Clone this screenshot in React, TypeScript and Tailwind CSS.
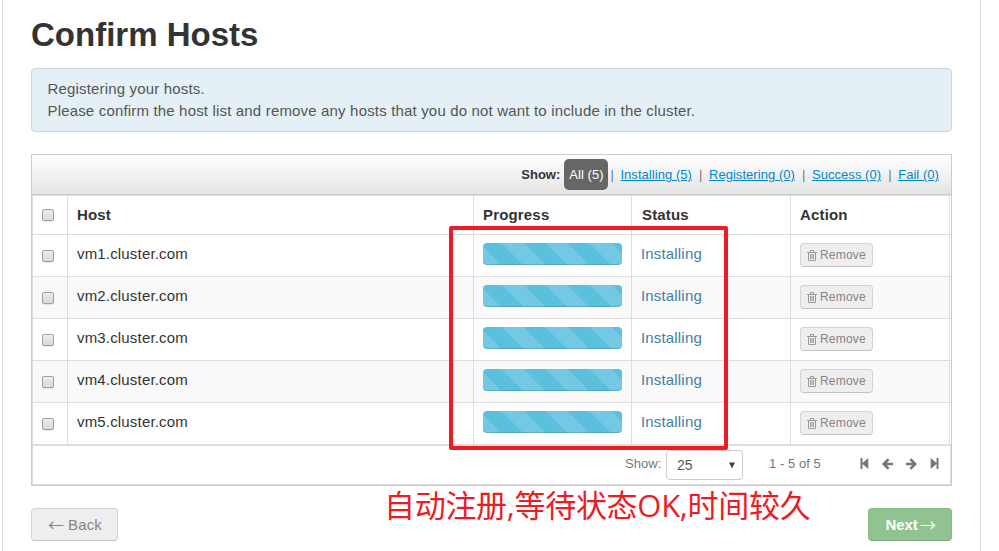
import React from "react";

const hosts = ["vm1.cluster.com", "vm2.cluster.com", "vm3.cluster.com", "vm4.cluster.com", "vm5.cluster.com"];

const filters = ["Installing (5)", "Registering (0)", "Success (0)", "Fail (0)"];

const columns = "grid grid-cols-[36px_406px_158px_159px_159px]";

function Checkbox() {
  return (
    <span className="block h-3 w-3 rounded-[2px] border border-[#a0a0a0] bg-linear-to-b from-[#ececec] to-[#d9d9d9] shadow-[0_1px_1px_rgba(0,0,0,0.08)]" />
  );
}

function TrashIcon() {
  return (
    <svg width="10" height="11" viewBox="0 0 10 11" fill="none" stroke="#9a9a9a" className="mr-[3px] shrink-0">
      <path d="M0 2.5h10M3.5 2V.5h3V2M1.5 3v7.5h7V3M3.5 4v5M5 4v5M6.5 4v5" />
    </svg>
  );
}

function StepIcon({ flip }: { flip?: boolean }) {
  return (
    <svg width="9" height="11" viewBox="0 0 9 11" fill="#777" className={flip ? "-scale-x-100" : ""}>
      <path d="M.5 0h2v4.9L8.3 0v11L2.5 6.1V11h-2z" />
    </svg>
  );
}

function ArrowIcon({ flip }: { flip?: boolean }) {
  return (
    <svg width="11" height="12" viewBox="0 0 11 12" fill="none" stroke="#777" strokeWidth="2.6" className={flip ? "-scale-x-100" : ""}>
      <path d="M6.6 1.2 1.8 6l4.8 4.8M2 6h9" />
    </svg>
  );
}

function HostRow({ name, striped }: { name: string; striped: boolean }) {
  return (
    <div className={`${columns} h-[42px] border-b border-[#ddd] ${striped ? "bg-[#f9f9f9]" : "bg-white"}`}>
      <div className="border-x border-[#ddd] pt-[15px] pl-[9px]">
        <Checkbox />
      </div>
      <div className="border-r border-[#ddd] pt-[8px] pl-[9px] text-[15px] leading-[22px] tracking-[0.17px]">{name}</div>
      <div className="border-r border-[#ddd] pt-[8px] pl-[9px]">
        <div className="h-[22px] w-[139px] rounded-[4px] bg-[#5bc0de] bg-[linear-gradient(45deg,rgba(255,255,255,0.15)_25%,transparent_25%,transparent_50%,rgba(255,255,255,0.15)_50%,rgba(255,255,255,0.15)_75%,transparent_75%,transparent)] bg-[length:44px_44px] bg-[position:19px_0] shadow-[inset_0_-1px_0_rgba(0,0,0,0.15)]" />
      </div>
      <div className="border-r border-[#ddd] pt-[8px] pl-[9px] text-[15px] leading-[22px] tracking-[0.17px] text-[#4080a5]">Installing</div>
      <div className="border-r border-[#ddd] pt-[8px] pl-[9px]">
        <button className="flex h-6 w-[73px] items-center rounded-[4px] border border-[#d3d3d3] border-b-[#c3c3c3] bg-[#eee] pl-[6px] text-[12px] tracking-[0.2px] text-[#858585]">
          <TrashIcon />
          Remove
        </button>
      </div>
    </div>
  );
}

export default function App() {
  return (
    <div className="h-[551px] w-[999px] overflow-hidden bg-white font-['Liberation_Sans',Arial,sans-serif] text-[#333]">
      <main className="relative ml-[2px] h-[551px] w-[979px] border-x border-[#ddd] pt-[15px] pr-[28px] pl-[28px]">
        <h1 className="h-[53px] text-[33px] leading-[40px] font-bold">Confirm Hosts</h1>
        <div className="h-[64px] w-[921px] rounded-[4px] border border-[#ccd8dd] bg-[#e4f0f5] pl-[15.5px] pt-[9px] text-[15px] leading-[22px] tracking-[0.17px] text-[#555]">
          <p>Registering your hosts.</p>
          <p>Please confirm the host list and remove any hosts that you do not want to include in the cluster.</p>
        </div>

        <section className="mt-[22px] h-[332px] w-[921px] border border-[#ccc]">
          <div className="flex h-[40px] items-center justify-end border-b border-[#ccc] bg-linear-to-b from-white to-[#e4e4e4] pr-[12px] text-[13px] tracking-[0.05px]">
            <b className="mr-1">Show:</b>
            <span className="mr-[-5px] flex h-[31px] w-[44px] items-center justify-center rounded-[5px] bg-[#666] text-white">All (5)</span>
            {filters.map((label) => (
              <React.Fragment key={label}>
                <span className="mx-[7px] w-[3px] text-[#777]">|</span>
                <a className="text-[#0088cc] underline">{label}</a>
              </React.Fragment>
            ))}
          </div>
          <div className={`${columns} h-[40px] border-y border-[#ddd] text-[15px] font-bold leading-[38px] tracking-[0.17px]`}>
            <div className="border-x border-[#ddd] pt-[13px] pl-[9px]">
              <Checkbox />
            </div>
            <div className="border-r border-[#ddd] pl-[9px]">Host</div>
            <div className="border-r border-[#ddd] pl-[9px]">Progress</div>
            <div className="border-r border-[#ddd] pl-[10px]">Status</div>
            <div className="border-r border-[#ddd] pl-[9px]">Action</div>
          </div>
          {hosts.map((name, i) => (
            <HostRow key={name} name={name} striped={i % 2 === 1} />
          ))}
          <div className="flex h-[40px] items-center border border-[#ddd] pl-[592px] text-[13px] tracking-[0.05px] text-[#777]">
            <span className="mt-[-2px] w-[41px]">Show:</span>
            <div className="flex h-[30px] w-[77px] items-center justify-between rounded-[4px] border border-[#ccc] bg-white pr-[7px] pl-[10px] text-[14px] text-[#555]">
              25
              <svg width="6" height="7" viewBox="0 0 6 7" fill="#444">
                <path d="M0 .5h6L3 6.5z" />
              </svg>
            </div>
            <span className="mt-[-2px] ml-[26px] w-[91px]">1 - 5 of 5</span>
            <div className="mt-[-3px] flex items-center gap-[13px]">
              <StepIcon />
              <ArrowIcon />
              <ArrowIcon flip />
              <StepIcon flip />
            </div>
          </div>
        </section>

        <div className="mt-[22px] flex w-[921px] justify-between">
          <button className="flex h-[33px] w-[87px] items-center rounded-[4px] border border-[#d3d3d3] border-b-[#c8c8c8] bg-[#eee] pt-[2px] pl-[12px] text-[15px] tracking-[0.17px] text-[#858585]">
            <span className="mt-[-4px] w-[24px] font-['Noto_Sans_CJK_SC',sans-serif] text-[16px] leading-[20px]">←</span>
            Back
          </button>
          <button className="flex h-[33px] w-[84px] items-center rounded-[4px] border border-[#86bd86] border-b-[#79ab79] bg-[#90c390] pt-[2px] pl-[14px] text-[15px] font-bold text-white">
            <span className="w-[37px] tracking-[-0.1px]">Next</span>
            <span className="mt-[-4px] font-['Noto_Sans_CJK_SC',sans-serif] text-[16px] leading-[20px] font-normal">→</span>
          </button>
        </div>

        <div className="absolute top-[226px] left-[446px] h-[224px] w-[279px] rounded-[2px] border-4 border-[#ed1c24]" />
        <div className="absolute top-[484px] left-[381px] font-['Open_Sans','Noto_Sans_CJK_SC',sans-serif] text-[31px] leading-[42px] tracking-[-0.3px] whitespace-nowrap text-[#ed1c24]">
          自动注册,等待状态OK,时间较久
        </div>
      </main>
    </div>
  );
}
